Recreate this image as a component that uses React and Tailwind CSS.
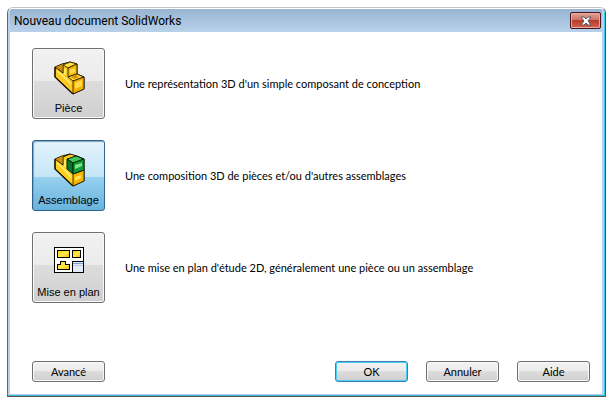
import React, { useState } from "react"

function PartIcon() {
  return (
    <svg
      className="h-10 w-10"
      viewBox="0 0 40 40"
      fill="none"
      stroke="#1c1400"
      strokeLinejoin="round"
      aria-hidden="true"
    >
      <path d="M6 10L13 7L21 5L28 7V17L35 20V32L24 37L6 20Z" fill="#ffc81e" />
      <path d="M7 10L13 8V15Z" fill="#d98c00" stroke="none" />
      <path d="M14 8L21 5L28 7L19 11Z" fill="#ffe23c" strokeWidth="0.8" />
      <path d="M19 11L28 7V17L19 20Z" fill="#f7b500" strokeWidth="0.8" />
      <path d="M19 20L28 17L35 20L24 24Z" fill="#ffd940" strokeWidth="0.8" />
      <path d="M22 20L27 18L30 20L25 22Z" fill="#e08f00" stroke="none" />
      <path d="M24 24L35 20V32L24 37Z" fill="#f5ad00" strokeWidth="0.8" />
      <path d="M26 26L33 23V29L26 32Z" fill="#ffdc4e" stroke="none" />
      <path d="M21 13L26 11V15L21 17Z" fill="#ffdc4e" stroke="none" />
      <path d="M8 14L14 19L22 27M16 12V18" stroke="#fff27a" strokeWidth="1.5" />
      <path d="M6 10L14 16V8" />
      <path d="M6 10V20L24 37" strokeWidth="1.3" />
    </svg>
  )
}

function AssemblyIcon() {
  return (
    <svg
      className="h-10 w-10"
      viewBox="0 0 40 40"
      fill="none"
      stroke="#1c1400"
      strokeLinejoin="round"
      aria-hidden="true"
    >
      <path d="M6 10L13 7L21 5L28 7L35 10V32L24 37L6 20Z" fill="#ffcf22" />
      <path d="M7 10L13 8V15Z" fill="#d98c00" stroke="none" />
      <path d="M8 14L14 19L22 28M16 11V18" stroke="#fff27a" strokeWidth="1.5" />
      <path d="M6 10L14 16V8L21 5" />
      <path d="M24 25L35 21V32L24 37Z" fill="#f7b500" strokeWidth="0.8" />
      <path d="M26 28L32 26V29L26 32Z" fill="#ffe15c" stroke="none" />
      <g stroke="#00280b">
        <path d="M18 10L27 7L35 10L24 14Z" fill="#3fc75a" />
        <path d="M18 10L24 14V25L18 20Z" fill="#07752a" />
        <path d="M24 14L35 10V21L24 25Z" fill="#159a38" />
      </g>
      <path d="M26 16L33 14V17L26 20Z" fill="#7de68c" stroke="none" />
      <path d="M6 10V20L24 37" strokeWidth="1.3" />
    </svg>
  )
}

function DrawingIcon() {
  return (
    <svg
      className="h-10 w-10"
      viewBox="0 0 40 40"
      shapeRendering="crispEdges"
      aria-hidden="true"
    >
      <defs>
        <linearGradient id="gold" x1="0" y1="0" x2="1" y2="1">
          <stop offset="0" stopColor="#ffc400" />
          <stop offset="0.5" stopColor="#ffec50" />
          <stop offset="1" stopColor="#ffb800" />
        </linearGradient>
      </defs>
      <rect x="5.5" y="6.5" width="29" height="25" fill="#fff" stroke="#000" />
      <rect x="8.5" y="9.5" width="12" height="7" fill="url(#gold)" stroke="#000" />
      <rect x="23.5" y="9.5" width="8" height="7" fill="url(#gold)" stroke="#000" />
      <path
        d="M8.5 28.5V23.5H11.5V20.5H16.5V23.5H20.5V28.5Z"
        fill="url(#gold)"
        stroke="#000"
      />
      <rect x="23.5" y="20.5" width="11" height="11" fill="#e3edf8" stroke="#000" />
      <path d="M24 22.5H34" stroke="#7da2ce" />
      <path d="M24 24.5H34" stroke="#b6cbe2" />
    </svg>
  )
}

const documents = [
  {
    id: "part",
    name: "Pièce",
    text: "Une représentation 3D d'un simple composant de conception",
    icon: <PartIcon />,
  },
  {
    id: "assembly",
    name: "Assemblage",
    text: "Une composition 3D de pièces et/ou d'autres assemblages",
    icon: <AssemblyIcon />,
  },
  {
    id: "drawing",
    name: "Mise en plan",
    text: "Une mise en plan d'étude 2D, généralement une pièce ou un assemblage",
    icon: <DrawingIcon />,
  },
]

const tile =
  "flex h-[71px] w-[73px] shrink-0 flex-col items-center justify-between rounded-[3px] border pt-2 pb-[3px] font-['Liberation_Sans',sans-serif] leading-[14px] whitespace-nowrap"
const tileNormal =
  "border-[#707070] bg-[linear-gradient(#f2f2f2,#ebebeb_46%,#dddddd_46%,#cfcfcf)] shadow-[inset_0_0_0_1px_#f8f8f8]"
const tileSelected =
  "border-[#2c628b] bg-[linear-gradient(#e5f4fc,#c4e5f6_52%,#98d1ef_52%,#68b3db)] shadow-[inset_1px_1px_1px_#7ba7c0]"

const button =
  "h-[21px] w-[73px] rounded-[3px] border bg-[linear-gradient(#f2f2f2,#ebebeb_48%,#dddddd_48%,#cfcfcf)] leading-[17px]"
const buttonNormal = "border-[#707070] shadow-[inset_0_0_0_1px_#f8f8f8]"
const buttonDefault = "border-[#3c7fb1] shadow-[inset_0_0_0_1px_#48d0f5]"

function App() {
  const [selected, setSelected] = useState("assembly")

  return (
    <div className="min-h-screen bg-white pt-[7px] pr-1.5 pb-2 pl-[7px] font-[Lato,sans-serif] text-[11px] text-black">
      <div className="rounded-t-md border border-t-[#c3c3c3] border-r-[#555] border-b-[#555] border-l-[#666]">
        <div className="overflow-hidden rounded-t-[5px] border-t border-r border-b border-t-white border-r-[#3cc9ee] border-b-[#35b9d6]">
          <div className="border-x-2 border-b border-[#b9d1ea]">
            <header className="flex h-[23px] items-center justify-between bg-linear-to-b from-[#98b4d2] to-[#b9d1ea] pr-px pl-1">
              <h1 className="font-[Roboto,sans-serif] text-xs leading-4">
                Nouveau document SolidWorks
              </h1>
              <button
                aria-label="Fermer"
                className="flex h-[17px] w-[31px] items-center justify-center rounded-[2px] border border-[#4a1420] bg-[linear-gradient(#dfa399,#cf7466_45%,#b83725_45%,#cf6450)] shadow-[inset_0_0_0_1px_#e6aaa0]"
              >
                <svg className="h-[10px] w-3" viewBox="0 0 12 10" aria-hidden="true">
                  <path
                    d="M1 1H4L6 3L8 1H11L8 5L11 9H8L6 7L4 9H1L4 5Z"
                    fill="#fff"
                    stroke="#535666"
                  />
                </svg>
              </button>
            </header>

            <main className="bg-white pt-4 pr-3 pb-3 pl-[22px]">
              <ul className="flex flex-col gap-[21px]">
                {documents.map((item) => (
                  <li key={item.id} className="flex items-center gap-5">
                    <button
                      id={item.id}
                      aria-pressed={selected === item.id}
                      onClick={() => setSelected(item.id)}
                      className={`${tile} ${
                        selected === item.id ? tileSelected : tileNormal
                      }`}
                    >
                      {item.icon}
                      {item.name}
                    </button>
                    <label htmlFor={item.id} className="leading-4">
                      {item.text}
                    </label>
                  </li>
                ))}
              </ul>

              <div className="mt-[58px] flex items-center justify-between">
                <button className={`${button} ${buttonNormal}`}>Avancé</button>
                <div className="flex gap-[18px]">
                  <button className={`${button} ${buttonDefault}`}>OK</button>
                  <button className={`${button} ${buttonNormal}`}>Annuler</button>
                  <button className={`${button} ${buttonNormal}`}>Aide</button>
                </div>
              </div>
            </main>
          </div>
        </div>
      </div>
    </div>
  )
}

export default App
